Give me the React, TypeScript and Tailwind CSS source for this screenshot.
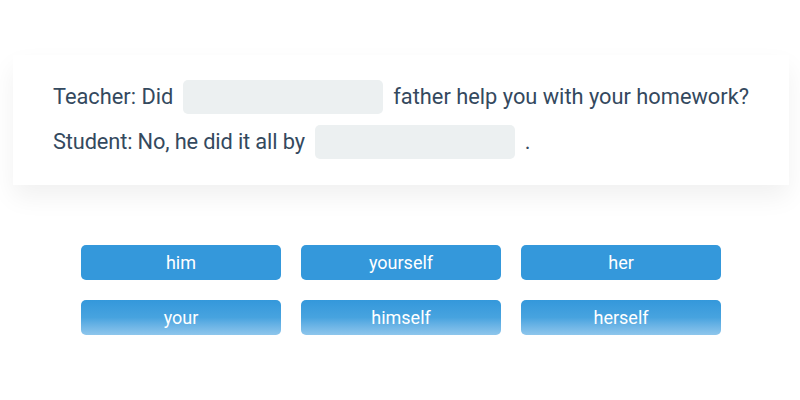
const words = ["him", "yourself", "her", "your", "himself", "herself"];

const Blank = () => <span className="inline-block h-[34px] w-[200px] rounded-[5px] bg-[#ecf0f1]" />;

export default function App() {
  return (
    <div className="min-h-[400px] w-[800px] bg-white pt-[55px] font-['Roboto',sans-serif]">
      <div className="ml-[13px] w-[776px] bg-white px-10 pt-[25px] pb-[26px] shadow-[0_12px_24px_rgba(0,0,0,0.06)]">
        <div className="flex flex-col gap-[11px] text-[21.8px] text-[#34495e]">
          <div className="flex items-center gap-[10px]">
            <span>Teacher: Did</span>
            <Blank />
            <span>father help you with your homework?</span>
          </div>
          <div className="flex items-center gap-[10px]">
            <span className="tracking-[-0.14px]">Student: No, he did it all by</span>
            <Blank />
            <span>.</span>
          </div>
        </div>
      </div>
      <div className="ml-[81px] mt-[60px] grid grid-cols-[200px_200px_200px] gap-5">
        {words.map((w, i) => (
          <button
            key={w}
            className={
              i < 3
                ? "h-[35px] rounded-[5px] bg-[#3498db] text-[18px] text-white"
                : "h-[35px] rounded-[5px] bg-gradient-to-b from-[#3498db] via-[#47a3df] to-[#8ec6ec] text-[18px] text-white"
            }
          >
            {w}
          </button>
        ))}
      </div>
    </div>
  );
}
